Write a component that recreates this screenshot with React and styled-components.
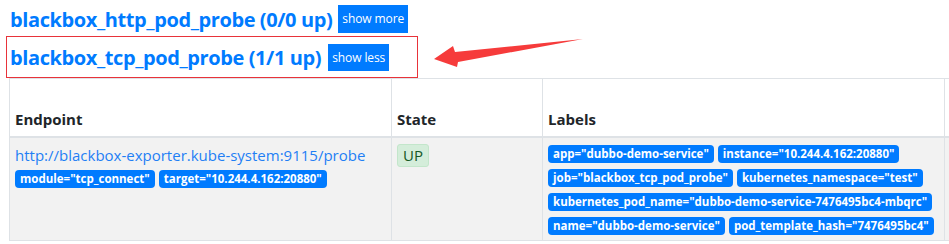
import React from "react";
import styled, { createGlobalStyle } from "styled-components";

const Global = createGlobalStyle`
  html, body { margin: 0; padding: 0; background: #fff; overflow: hidden; }
  body { font-family: "Open Sans", "Noto Sans", sans-serif; color: #212529; }
`;

const Page = styled.div`
  position: relative;
  width: 949px;
  height: 244px;
  overflow: hidden;
  padding-top: 5px;
  box-sizing: border-box;
`;

const JobRow = styled.div`
  display: flex;
  align-items: center;
  height: 28px;
  padding-left: 10px;
`;

const Highlight = styled.div`
  margin: 3px 0 0 6px;
  width: 412px;
  height: 42px;
  box-sizing: border-box;
  border: 1px solid #e8333a;
  display: flex;
  align-items: center;
  padding-left: 3px;
  padding-top: 1px;
`;

const JobTitle = styled.span`
  font-size: 20px;
  font-weight: 700;
  color: #007bff;
  letter-spacing: -0.4px;
  white-space: nowrap;
`;

const ToggleButton = styled.button`
  margin-left: ${(p) => p.$ml}px;
  height: ${(p) => p.$h}px;
  padding: 0 4px;
  border: none;
  border-radius: 0;
  background: #007bff;
  color: #fff;
  font-family: inherit;
  font-size: 12px;
  letter-spacing: -0.1px;
  line-height: 1;
  white-space: nowrap;
`;

const TableWrap = styled.div`
  margin-left: 9px;
`;

const Table = styled.table`
  border-collapse: collapse;
  table-layout: fixed;
  width: 1200px;
  font-size: 15px;
`;

const Th = styled.th`
  box-sizing: border-box;
  width: ${(p) => p.$w}px;
  height: 58px;
  border: 1px solid #dee2e6;
  border-bottom: 2px solid #dee2e6;
  padding: 0 5px 5px;
  text-align: left;
  vertical-align: bottom;
  font-weight: 700;
  font-size: 15px;
  line-height: 24px;
`;

const Td = styled.td`
  box-sizing: border-box;
  border: 1px solid #dee2e6;
  background: #f2f2f2;
  padding: 5px;
  vertical-align: top;
  height: 104px;
  line-height: 24px;
`;

const EndpointLink = styled.a`
  display: block;
  color: #1f7ff5;
  text-decoration: none;
  font-size: 15px;
  line-height: 24px;
  white-space: nowrap;
`;

const BadgeList = styled.div`
  display: flex;
  flex-wrap: wrap;
  column-gap: 4px;
  row-gap: 6px;
  padding-top: ${(p) => p.$top || 0}px;
`;

const Badge = styled.span`
  display: inline-block;
  height: 18px;
  line-height: 18px;
  padding: 0 5px;
  border-radius: 4px;
  background: #007bff;
  color: #fff;
  font-size: 11.5px;
  font-weight: 700;
  white-space: nowrap;
`;

const StateBadge = styled.span`
  display: inline-block;
  margin-top: -1px;
  height: 21px;
  line-height: 21px;
  padding: 0 5px;
  border: 1px solid #c3e6cb;
  border-radius: 3px;
  background: #d4edda;
  color: #155724;
  font-size: 15px;
`;

const ArrowSvg = styled.svg`
  position: absolute;
  left: 0;
  top: 0;
  pointer-events: none;
`;

const labels = [
  'app="dubbo-demo-service"',
  'instance="10.244.4.162:20880"',
  'job="blackbox_tcp_pod_probe"',
  'kubernetes_namespace="test"',
  'kubernetes_pod_name="dubbo-demo-service-7476495bc4-mbqrc"',
  'name="dubbo-demo-service"',
  'pod_template_hash="7476495bc4"',
];

export default function App() {
  return (
    <>
      <Global />
      <Page>
        <JobRow>
          <JobTitle>blackbox_http_pod_probe (0/0 up)</JobTitle>
          <ToggleButton $h={28} $ml={6}>show more</ToggleButton>
        </JobRow>
        <Highlight>
          <JobTitle>blackbox_tcp_pod_probe (1/1 up)</JobTitle>
          <ToggleButton $h={27} $ml={7}>show less</ToggleButton>
        </Highlight>
        <TableWrap>
          <Table>
            <thead>
              <tr>
                <Th $w={382}>Endpoint</Th>
                <Th $w={151}>State</Th>
                <Th $w={402}>Labels</Th>
                <Th $w={265} />
              </tr>
            </thead>
            <tbody>
              <tr>
                <Td>
                  <EndpointLink href="#">
                    http://blackbox-exporter.kube-system:9115/probe
                  </EndpointLink>
                  <BadgeList $top={3}>
                    <Badge>module="tcp_connect"</Badge>
                    <Badge>target="10.244.4.162:20880"</Badge>
                  </BadgeList>
                </Td>
                <Td>
                  <StateBadge>UP</StateBadge>
                </Td>
                <Td>
                  <BadgeList $top={2}>
                    {labels.map((l) => (
                      <Badge key={l}>{l}</Badge>
                    ))}
                  </BadgeList>
                </Td>
                <Td />
              </tr>
            </tbody>
          </Table>
        </TableWrap>
        <ArrowSvg width="949" height="244" viewBox="0 0 949 244">
          <polygon
            points="434,59 453,46 455,52 583,39 458,62 457,67"
            fill="#f63b3b"
          />
        </ArrowSvg>
      </Page>
    </>
  );
}
